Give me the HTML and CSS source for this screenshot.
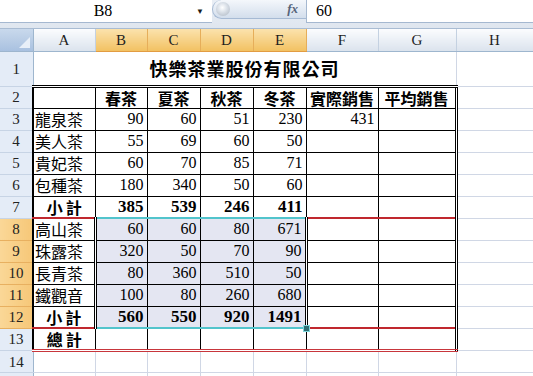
FILE: index.html
```html
<!DOCTYPE html>
<html>
	<head>
		<meta charset="utf-8">
		<title>快樂茶業股份有限公司</title>
		<link rel="stylesheet" href="styles.css">
	</head>
	<body>
		<div class="formula-bar">
			<div class="name-box"><span class="name">B8</span><span class="drop">&#9660;</span></div>
			<div class="fx-area"><span class="knob"></span><i class="fx">fx</i></div>
			<div class="formula">60</div>
		</div>
		<table class="sheet">
			<colgroup>
				<col style="width:33px"><col style="width:62px"><col style="width:52px"><col style="width:53px"><col style="width:53px"><col style="width:53px"><col style="width:72px"><col style="width:78px"><col style="width:77px">
			</colgroup>
			<tr class="col-head">
				<th class="corner"><span class="tri"></span></th>
				<th>A</th><th class="sel">B</th><th class="sel">C</th><th class="sel">D</th><th class="sel">E</th><th>F</th><th>G</th><th>H</th>
			</tr>
			<tr class="r1">
				<th class="rh">1</th>
				<td class="title" colspan="7">快樂茶業股份有限公司</td>
				<td></td>
			</tr>
			<tr>
				<th class="rh">2</th>
				<td class="b first"></td>
				<td class="b hd">春茶</td><td class="b hd">夏茶</td><td class="b hd">秋茶</td><td class="b hd">冬茶</td>
				<td class="b hd">實際銷售</td><td class="b hd last">平均銷售</td>
				<td></td>
			</tr>
			<tr>
				<th class="rh">3</th>
				<td class="b first lbl">龍泉茶</td>
				<td class="b num">90</td><td class="b num">60</td><td class="b num">51</td><td class="b num">230</td>
				<td class="b num">431</td><td class="b last"></td>
				<td></td>
			</tr>
			<tr>
				<th class="rh">4</th>
				<td class="b first lbl">美人茶</td>
				<td class="b num">55</td><td class="b num">69</td><td class="b num">60</td><td class="b num">50</td>
				<td class="b"></td><td class="b last"></td>
				<td></td>
			</tr>
			<tr>
				<th class="rh">5</th>
				<td class="b first lbl">貴妃茶</td>
				<td class="b num">60</td><td class="b num">70</td><td class="b num">85</td><td class="b num">71</td>
				<td class="b"></td><td class="b last"></td>
				<td></td>
			</tr>
			<tr>
				<th class="rh">6</th>
				<td class="b first lbl">包種茶</td>
				<td class="b num">180</td><td class="b num">340</td><td class="b num">50</td><td class="b num">60</td>
				<td class="b"></td><td class="b last"></td>
				<td></td>
			</tr>
			<tr>
				<th class="rh">7</th>
				<td class="b first sub red">小計</td>
				<td class="b tot cyan">385</td><td class="b tot cyan">539</td><td class="b tot cyan">246</td><td class="b tot cyan">411</td>
				<td class="b red"></td><td class="b last red"></td>
				<td></td>
			</tr>
			<tr>
				<th class="rh sel">8</th>
				<td class="b first lbl">高山茶</td>
				<td class="b num hl hl-l">60</td><td class="b num hl">60</td><td class="b num hl">80</td><td class="b num hl hl-r">671</td>
				<td class="b"></td><td class="b last"></td>
				<td></td>
			</tr>
			<tr>
				<th class="rh sel">9</th>
				<td class="b first lbl">珠露茶</td>
				<td class="b num hl hl-l">320</td><td class="b num hl">50</td><td class="b num hl">70</td><td class="b num hl hl-r">90</td>
				<td class="b"></td><td class="b last"></td>
				<td></td>
			</tr>
			<tr>
				<th class="rh sel">10</th>
				<td class="b first lbl">長青茶</td>
				<td class="b num hl hl-l">80</td><td class="b num hl">360</td><td class="b num hl">510</td><td class="b num hl hl-r">50</td>
				<td class="b"></td><td class="b last"></td>
				<td></td>
			</tr>
			<tr>
				<th class="rh sel">11</th>
				<td class="b first lbl">鐵觀音</td>
				<td class="b num hl hl-l">100</td><td class="b num hl">80</td><td class="b num hl">260</td><td class="b num hl hl-r">680</td>
				<td class="b"></td><td class="b last"></td>
				<td></td>
			</tr>
			<tr>
				<th class="rh sel">12</th>
				<td class="b first sub red">小計</td>
				<td class="b tot hl hl-l cyan">560</td><td class="b tot hl cyan">550</td><td class="b tot hl cyan">920</td><td class="b tot hl hl-r cyan handle-cell">1491<span class="handle"></span></td>
				<td class="b red"></td><td class="b last red"></td>
				<td></td>
			</tr>
			<tr class="grand">
				<th class="rh">13</th>
				<td class="b first sub">總計</td>
				<td class="b"></td><td class="b"></td><td class="b"></td><td class="b"></td>
				<td class="b"></td><td class="b last"></td>
				<td></td>
			</tr>
			<tr>
				<th class="rh">14</th>
				<td></td><td></td><td></td><td></td><td></td><td></td><td></td><td></td>
			</tr>
			<tr>
				<th class="rh"></th>
				<td></td><td></td><td></td><td></td><td></td><td></td><td></td><td></td>
			</tr>
		</table>
	</body>
</html>
```

FILE: styles.css
```css
html, body{
	margin: 0;
	padding: 0;
}
body{
	width: 533px;
	height: 376px;
	overflow: hidden;
	background-color: #ffffff;
	font-family: "Liberation Serif", "Noto Sans CJK TC", serif;
	color: #000000;
}
.formula-bar{
	display: flex;
	align-items: flex-start;
	height: 28px;
	background: linear-gradient(#e9eef5, #dfe6ef);
	border-bottom: 1px solid #a9bcd3;
}
.name-box{
	display: flex;
	align-items: center;
	width: 212px;
	height: 22px;
	background-color: #ffffff;
	border-bottom: 1px solid #a5b8d0;
}
.name{
	flex: 1;
	text-align: center;
	font-size: 16px;
	padding-left: 10px;
}
.drop{
	width: 16px;
	font-size: 8px;
	color: #1b1b1b;
}
.fx-area{
	display: flex;
	align-items: center;
	justify-content: space-between;
	width: 93px;
	height: 18px;
	border: 1px solid #a6bad4;
	border-top: none;
	border-right: none;
	border-radius: 10px 0 0 10px;
	background: linear-gradient(#f4f7fb, #d3deec);
}
.knob{
	width: 14px;
	height: 14px;
	margin-left: 3px;
	border-radius: 50%;
	background: radial-gradient(circle at 45% 40%, #ffffff 0, #dfe5ec 35%, #a9b3bf 100%);
}
.fx{
	font-family: "Liberation Serif", serif;
	font-size: 13px;
	font-weight: bold;
	color: #56647a;
	margin-right: 8px;
}
.formula{
	flex: 1;
	height: 22px;
	line-height: 22px;
	padding-left: 9px;
	background-color: #ffffff;
	border-left: 1px solid #a5b8d0;
	border-bottom: 1px solid #a5b8d0;
	font-size: 16px;
}
.sheet{
	border-collapse: collapse;
	table-layout: fixed;
	width: 533px;
}
.sheet tr{
	height: 22px;
}
.sheet tr.r1{
	height: 35px;
}
.sheet td, .sheet th{
	height: 20px;
	line-height: 18px;
	padding: 0 3px;
	border: none;
	border-right: 1px solid #d0d7e5;
	border-bottom: 1px solid #d0d7e5;
	white-space: nowrap;
	overflow: hidden;
	font-weight: normal;
	vertical-align: middle;
}
.sheet .col-head th{
	height: 20px;
	padding: 0;
	background: linear-gradient(#fbfcfe, #dbe3ed);
	border-right: 1px solid #c4d1e1;
	border-bottom: 1px solid #9eb6ce;
	font-size: 15px;
	color: #1e1e1e;
	text-align: center;
}
.sheet .col-head th.sel{
	background: linear-gradient(#fbe2ad, #f2c162);
	border-right-color: #e6ae5a;
	border-bottom-color: #e29c42;
}
.sheet .col-head th.corner{
	position: relative;
	background: linear-gradient(#c9d9ec, #a9c1e0);
	border-right: 1px solid #9eb6ce;
}
.tri{
	position: absolute;
	right: 3px;
	bottom: 3px;
	width: 0;
	height: 0;
	border-left: 11px solid transparent;
	border-bottom: 11px solid #e8eff8;
}
.sheet th.rh{
	padding: 0;
	background-color: #e4ecf7;
	border-right: 1px solid #9eb6ce;
	border-bottom: 1px solid #c7d4e5;
	font-size: 15px;
	color: #222222;
	text-align: center;
}
.sheet th.rh.sel{
	background: linear-gradient(90deg, #fad797, #f6c778);
	border-bottom-color: #e8b060;
	border-right-color: #e29c42;
}
.sheet td.title{
	text-align: center;
	font-family: "Noto Sans CJK TC", sans-serif;
	font-weight: bold;
	font-size: 18px;
	line-height: 24px;
	letter-spacing: 1px;
	border-bottom: 3px double #000000;
}
.sheet td.b{
	border-right: 1px solid #000000;
	border-bottom: 1px solid #000000;
}
.sheet td.first{
	border-left: 2px solid #000000;
}
.sheet td.last{
	border-right: 3px double #000000;
}
.sheet td.hd{
	text-align: center;
	font-family: "Noto Sans CJK TC", sans-serif;
	font-weight: bold;
	font-size: 16px;
}
.sheet td.lbl{
	padding-left: 1px;
	font-family: "Noto Sans CJK TC", sans-serif;
	font-size: 16px;
}
.sheet td.sub{
	text-align: center;
	font-family: "Noto Sans CJK TC", sans-serif;
	font-weight: bold;
	font-size: 16px;
	line-height: 18px;
	letter-spacing: 3px;
	text-indent: 3px;
}
.sheet td.num{
	text-align: right;
	font-size: 16px;
}
.sheet td.tot{
	text-align: right;
	font-size: 17px;
	font-weight: bold;
}
.sheet td.red{
	border-bottom: 2px solid #c0282e;
}
.sheet td.cyan{
	border-bottom: 2px solid #52c4cc;
}
.sheet td.hl{
	background-color: #e4e6f2;
}
.sheet td.hl-l{
	border-left: 3px double #000000;
}
.sheet td.hl-r{
	border-right: 3px double #000000;
}
.sheet .grand td.b{
	border-bottom: 3px double #c8363c;
}
.sheet td.handle-cell{
	position: relative;
	overflow: visible;
}
.handle{
	position: absolute;
	right: -5px;
	bottom: -5px;
	width: 5px;
	height: 5px;
	background-color: #2f6f74;
	border: 1px solid #7fd6dc;
}
```
